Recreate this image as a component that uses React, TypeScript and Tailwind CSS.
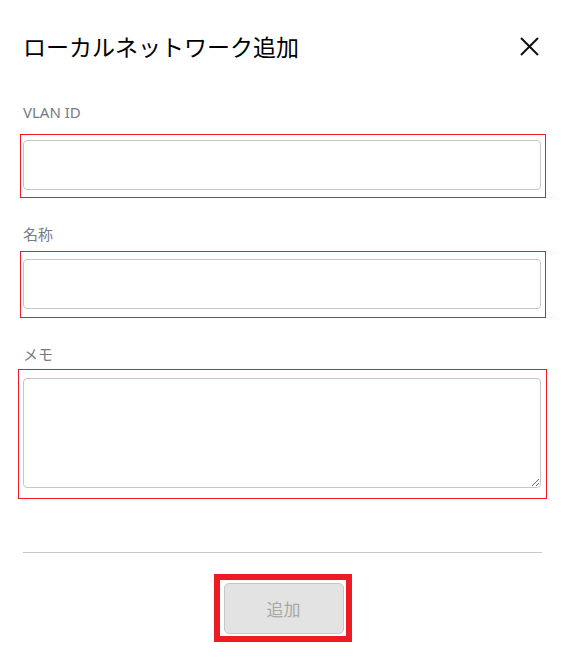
const labelCls =
  "block text-[15px] leading-5 text-[#767b85] font-['Noto_Sans','Noto_Sans_CJK_JP',sans-serif]";

const CloseIcon = () => (
  <svg width="19" height="19" viewBox="0 0 19 19" fill="none">
    <path d="M1 1L18 18M18 1L1 18" stroke="#111" strokeWidth="2" />
  </svg>
);

export default function App() {
  return (
    <div className="min-h-[661px] w-[566px] bg-white pl-[23px] pr-[24px] font-['Noto_Sans','Noto_Sans_CJK_JP',sans-serif]">
      <div className="flex items-center justify-between pt-[28px]">
        <h1 className="text-[23px] leading-[36px] text-black font-['Noto_Sans_CJK_JP',sans-serif]">
          ローカルネットワーク追加
        </h1>
        <button className="mr-[3px]">
          <CloseIcon />
        </button>
      </div>

      <label className={`${labelCls} mt-[38px] mb-[12px]`}>VLAN ID</label>
      <div className="-ml-[3px] -mr-[4px] border border-[#ed1c24] pl-[2px] pr-[4px] pt-[5px] pb-[7px]">
        <input
          type="text"
          className="block h-[50px] w-full rounded-[4px] border border-[#c6c6c6] bg-white px-3 outline-none"
        />
      </div>

      <label className={`${labelCls} mt-[26px] mb-[7px]`}>名称</label>
      <div className="-ml-[3px] -mr-[4px] border border-[#ed1c24] pl-[2px] pr-[4px] pt-[7px] pb-[8px]">
        <input
          type="text"
          className="block h-[50px] w-full rounded-[4px] border border-[#c6c6c6] bg-white px-3 outline-none"
        />
      </div>

      <label className={`${labelCls} mt-[26px] mb-[5px]`}>メモ</label>
      <div className="-ml-[5px] -mr-[5px] border border-[#ed1c24] pl-[4px] pr-[5px] pt-[8px] pb-[10px]">
        <textarea className="block h-[110px] w-full rounded-[4px] border border-[#c6c6c6] bg-white px-3 py-2 outline-none" />
      </div>

      <div className="mt-[53px] h-px bg-[#c8c8c8]" />

      <div className="mx-auto mt-[21px] w-[138px] border-[6px] border-[#ed1c24] pl-[4px] pr-[2px] pt-[3px] pb-[2px]">
        <button
          disabled
          className="flex h-[51px] w-[120px] items-center justify-center rounded-[5px] border border-[#c7c7c7] bg-[#e3e3e3] text-[17px] text-[#a8a8a8] font-['Noto_Sans_CJK_JP',sans-serif]"
        >
          追加
        </button>
      </div>
    </div>
  );
}
